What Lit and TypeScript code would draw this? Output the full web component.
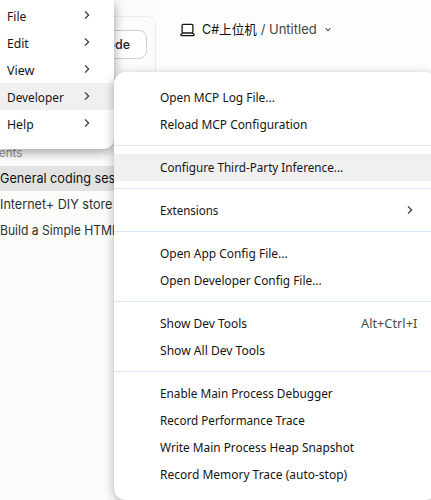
import { LitElement, html, css, svg } from "lit";
import { customElement, property } from "lit/decorators.js";

interface Item {
  label: string;
  width: number;
  active?: boolean;
  arrow?: boolean;
  hint?: string;
}

const menu: Item[] = [
  { label: "File", width: 19.5 },
  { label: "Edit", width: 21.5 },
  { label: "View", width: 27 },
  { label: "Developer", width: 56.5, active: true },
  { label: "Help", width: 26.5 },
];

const groups: Item[][] = [
  [
    { label: "Open MCP Log File...", width: 114.5 },
    { label: "Reload MCP Configuration", width: 147.5 },
  ],
  [{ label: "Configure Third-Party Inference...", width: 183.5, active: true }],
  [{ label: "Extensions", width: 58.5, arrow: true }],
  [
    { label: "Open App Config File...", width: 127.5 },
    { label: "Open Developer Config File...", width: 161.5 },
  ],
  [
    { label: "Show Dev Tools", width: 87.5, hint: "Alt+Ctrl+I" },
    { label: "Show All Dev Tools", width: 105 },
  ],
  [
    { label: "Enable Main Process Debugger", width: 172.5 },
    { label: "Record Performance Trace", width: 144.5 },
    { label: "Write Main Process Heap Snapshot", width: 194 },
    { label: "Record Memory Trace (auto-stop)", width: 187 },
  ],
];

const chevron = html`<svg width="8" height="10" viewBox="0 0 8 10" fill="none">
  ${svg`<path d="M2 1.4 5.6 5 2 8.6" stroke="#3a3a3a" stroke-width="1.3"/>`}
</svg>`;

/** Single line of text condensed or expanded to fill a given width. */
@customElement("fit-text")
class FitText extends LitElement {
  @property() text = "";
  @property({ type: Number }) width = 0;
  static styles = css`
    :host { display: inline-block; white-space: pre; }
    span { display: inline-block; transform-origin: 0 50%; }
  `;
  updated() {
    const el = this.renderRoot.querySelector("span") as HTMLElement;
    const natural = el.offsetWidth;
    this.style.width = `${this.width}px`;
    el.style.transform = `scaleX(${this.width / natural})`;
  }
  render() {
    return html`<span>${this.text}</span>`;
  }
}

@customElement("app-root")
class AppRoot extends LitElement {
  static styles = css`
    :host {
      display: block;
      position: relative;
      width: 431px;
      height: 500px;
      overflow: hidden;
      background: #fdfdfc;
      font-family: "Noto Sans", "Noto Sans CJK SC", sans-serif;
      font-size: 13px;
      color: #141414;
    }
    * { box-sizing: border-box; }
    svg { display: block; flex: none; }
    .page { display: flex; height: 500px; font-family: Inter, "Noto Sans CJK SC", sans-serif; }
    .side { width: 156px; flex: none; display: flex; flex-direction: column; background: #fcfcfb; }
    .card {
      height: 130px;
      margin-top: 16px;
      border: 1px solid #ebebea;
      border-bottom: 0;
      border-left: 0;
      border-radius: 0 9px 0 0;
      padding: 13px 8px 0 0;
      display: flex;
      justify-content: flex-end;
      align-items: flex-start;
    }
    .tab {
      height: 29px;
      width: 80px;
      border: 1px solid #cfcfce;
      border-radius: 8px;
      background: #fff;
      padding-right: 16px;
      text-align: right;
      line-height: 27px;
      font-size: 12.5px;
      font-weight: 500;
      color: #1b1b1b;
    }
    .heading { height: 20px; line-height: 14px; margin-left: -1px; font-size: 11.5px; color: #8a8a89; }
    .session { height: 26px; line-height: 26px; font-size: 13px; color: #30302f; white-space: nowrap; }
    .session.on { background: #e3e3e2; color: #111; height: 25px; line-height: 25px; }
    .main { flex: 1; padding: 20px 0 0 24px; }
    .title { display: flex; align-items: center; height: 19px; line-height: 19px; font-size: 13px; color: #121212; }
    .title .names { display: flex; height: 19px; margin: 0 8px 0 7px; width: 115px; white-space: pre; }
    .title fit-text { height: 19px; overflow: hidden; }
    .muted { color: #454544; }
    .panel { position: absolute; background: #fff; }
    .menubar {
      left: 0;
      top: 0;
      width: 114px;
      height: 149px;
      padding-top: 2px;
      border-radius: 0 0 10px 0;
      box-shadow: 0 3px 12px rgba(0, 0, 0, 0.38);
    }
    .submenu {
      left: 114px;
      top: 72px;
      width: 323px;
      height: 428px;
      padding-top: 12px;
      border-radius: 12px;
      box-shadow: 0 3px 11px rgba(0, 0, 0, 0.3);
    }
    .row { display: flex; align-items: center; height: 27px; line-height: 27px; }
    .row.on { background: #f0f0f0; }
    .menubar .row { padding: 0 23px 0 7px; justify-content: space-between; }
    .menubar .row fit-text { margin-top: 2px; }
    .menubar .row svg { margin-bottom: 1px; }
    .submenu .row { padding: 0 20px 0 46px; justify-content: space-between; }
    .submenu .row svg { margin: 0 3px 1px 0; }
    .hint { color: #4a4a4a; }
    .rule { height: 1px; margin: 7px 0 8px; background: #d9e6fa; }
  `;

  private row(i: Item, arrow: boolean) {
    return html`<div class="row ${i.active ? "on" : ""}">
      <fit-text .text=${i.label} .width=${i.width}></fit-text>
      ${i.hint ? html`<fit-text class="hint" .text=${i.hint} .width=${56}></fit-text>` : ""}
      ${arrow ? chevron : ""}
    </div>`;
  }

  render() {
    return html`
      <div class="page">
        <div class="side">
          <div class="card"><div class="tab">Code</div></div>
          <div class="heading">ents</div>
          <div class="session on"><fit-text .text=${"General coding session"} .width=${140}></fit-text></div>
          <div class="session"><fit-text .text=${"Internet+ DIY store"} .width=${112.5}></fit-text></div>
          <div class="session"><fit-text .text=${"Build a Simple HTML"} .width=${118.5}></fit-text></div>
        </div>
        <div class="main">
          <div class="title">
            <svg width="15" height="14" viewBox="0 0 15 14" fill="none" stroke="#161616" stroke-width="1.3" stroke-linejoin="round">
              <rect x="2.1" y="1.3" width="10.8" height="8.7" rx="1.2" />
              <path d="M2.6 10 .9 11.5Q.8 12.6 1.7 12.6H13.3Q14.2 12.6 14.1 11.5L12.4 10" />
            </svg>
            <div class="names">
              <fit-text .text=${"C#上位机"} .width=${55}></fit-text>
              <fit-text class="muted" .text=${" / Untitled"} .width=${60}></fit-text>
            </div>
            <svg width="6" height="5" viewBox="0 0 6 5" fill="none" stroke="#555" stroke-width="1.1">
              <path d="M.6 1.2 3 3.6 5.4 1.2" />
            </svg>
          </div>
        </div>
      </div>
      <div class="panel menubar">${menu.map((i) => this.row(i, true))}</div>
      <div class="panel submenu">
        ${groups.map((g, n) => html`${n ? html`<div class="rule"></div>` : ""}${g.map((i) => this.row(i, !!i.arrow))}`)}
      </div>
    `;
  }
}
